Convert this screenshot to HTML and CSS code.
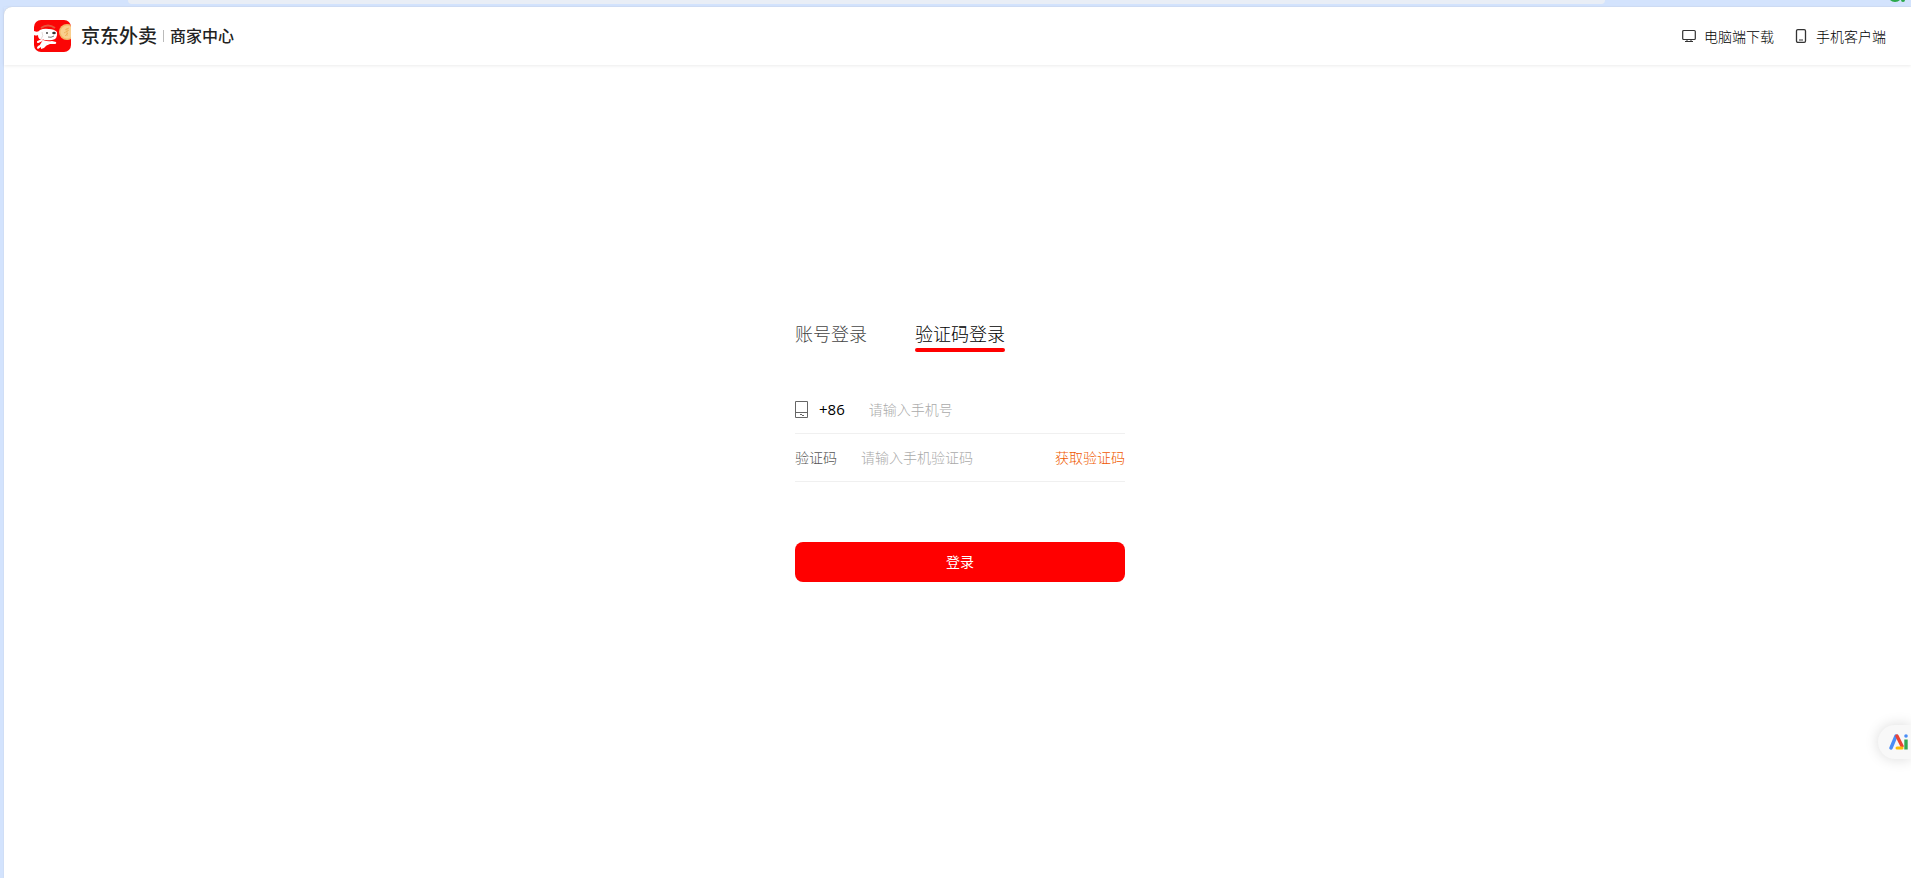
FILE: index.html
```html
<!DOCTYPE html>
<html lang="zh-CN">
<head>
    <meta charset="UTF-8">
    <meta name="viewport" content="width=device-width, initial-scale=1.0">
    <title>京东外卖商家中心</title>
    <link rel="stylesheet" href="styles.css">
</head>
<body>
    <div class="toolbar">
        <div class="address-bar"></div>
        <svg class="toolbar-icon" width="18" height="3" viewBox="0 0 18 3">
            <path d="M1 0h10q-2 2-5 2T1 0zM12 0h4q0 2-2 2t-2-2z" fill="#2ba84a"/>
        </svg>
    </div>
    <div class="page">
        <header class="header">
            <div class="brand">
                <svg class="logo" width="37" height="32" viewBox="0 0 37 32">
                    <defs>
                        <clipPath id="logo-clip"><rect width="37" height="32" rx="7"/></clipPath>
                    </defs>
                    <g clip-path="url(#logo-clip)">
                        <rect width="37" height="32" fill="#fb0505"/>
                        <path d="M7 8Q14 3 21 8" fill="none" stroke="#e8553c" stroke-width="2"/>
                        <!-- dog -->
                        <path d="M0 11Q4 13 6 10Q10 8 15 9Q20 9 23 12Q24 19 18 20Q11 21 8 19Q4 20 4 15Q2 16 0 15z" fill="#fff"/>
                        <path d="M9 20Q14 22 18 21L22 22Q23 24 20 24L16 24Q12 25 10 28L7 29L7 27L4 29Q2 28 4 26Q6 26 7 23z" fill="#fff"/>
                        <path d="M4 22l4-2" stroke="#fff" stroke-width="2" stroke-linecap="round"/>
                        <path d="M8 12Q10 16 7 19" fill="none" stroke="#e4dada" stroke-width="1"/>
                        <ellipse cx="20" cy="13" rx="1.800" ry="1.200" fill="#333"/>
                        <circle cx="13" cy="13" r=".9" fill="#333"/>
                        <path d="M14 17Q17 18 20 16" fill="none" stroke="#555" stroke-width=".8"/>
                        <!-- coin -->
                        <circle cx="33" cy="12" r="8" fill="#f3b769"/>
                        <circle cx="33" cy="12" r="6.500" fill="#f9cf8d"/>
                        <path d="M31 10l4-2M30 13l5-3M31 16l3-3M33 8v8" stroke="#eeac55" stroke-width=".8"/>
                    </g>
                </svg>
                <span class="brand-name">京东外卖</span>
                <span class="brand-line"></span>
                <span class="brand-sub">商家中心</span>
            </div>
            <nav class="downloads">
                <a href="#">
                    <svg width="14" height="14" viewBox="0 0 14 14" fill="none" stroke="#333">
                        <rect x=".7" y="1.500" width="12.600" height="9" rx="1" stroke-width="1.200"/>
                        <path d="M5 11v1.500M9 11v1.500M3 12.500h8"/>
                    </svg>
                    电脑端下载
                </a>
                <a href="#">
                    <svg width="14" height="14" viewBox="0 0 14 14" fill="none" stroke="#333">
                        <rect x="2.500" y=".7" width="9" height="12.600" rx="1.300" stroke-width="1.300"/>
                        <path d="M5 11h4"/>
                    </svg>
                    手机客户端
                </a>
            </nav>
        </header>
        <main class="content">
            <form class="login">
                <div class="tabs">
                    <button type="button" class="tab">账号登录</button>
                    <button type="button" class="tab active">验证码登录</button>
                </div>
                <div class="row">
                    <label class="area" for="phone">
                        <svg width="13" height="17" viewBox="0 0 13 17" fill="none" stroke="#666">
                            <path d="M.5.5h12v16H.5zM.5 11.500h12"/>
                            <path d="M5 13.500h2M7 14.500h2"/>
                        </svg>
                        <span>+86</span>
                    </label>
                    <input type="text" id="phone" placeholder="请输入手机号">
                </div>
                <div class="row">
                    <label class="code-label" for="code">验证码</label>
                    <input type="text" id="code" placeholder="请输入手机验证码">
                    <button type="button" class="get-code">获取验证码</button>
                </div>
                <button type="submit" class="submit">登录</button>
            </form>
        </main>
    </div>
    <button type="button" class="ai-button" aria-label="AI">
        <svg width="20" height="16" viewBox="0 0 20 16" fill="none" stroke-width="3.400" stroke-linecap="round">
            <path d="M2 14L7 2" stroke="#4a8df6"/>
            <path d="M8 2l5 10" stroke="#ea4335"/>
            <path d="M8 14h5" stroke="#fbbc05" stroke-width="3"/>
            <path d="M17 5.500v10" stroke="#34a853" stroke-linecap="butt"/>
            <circle cx="17" cy="2" r="1.800" fill="#4a8df6"/>
        </svg>
    </button>
</body>
</html>
```

FILE: styles.css
```css
* {
    box-sizing: border-box;
}
body {
    margin: 0;
    min-height: 100vh;
    display: flex;
    flex-direction: column;
    padding-left: 4px;
    background: #d3e3fd;
    font-family: "Noto Sans CJK SC", sans-serif;
    font-size: 14px;
    font-weight: 300;
    color: #222;
    overflow-x: hidden;
}
button, input {
    font: inherit;
    border: none;
    padding: 0;
    background: none;
}
button {
    cursor: pointer;
}
a {
    color: inherit;
    text-decoration: none;
}
.toolbar {
    display: flex;
    justify-content: space-between;
    align-items: flex-start;
    height: 7px;
    padding: 0 4px 0 124px;
}
.address-bar {
    flex: 1;
    height: 4px;
    margin-right: 284px;
    border-radius: 0 0 10px 10px;
    background: #e9eef6;
}
.page {
    flex: 1;
    display: flex;
    flex-direction: column;
    background: #fff;
    border-radius: 8px 0 0 0;
    box-shadow: 0 0 1px #b9b9b9;
}
.header {
    display: flex;
    justify-content: space-between;
    align-items: center;
    height: 58px;
    padding: 0 25px 0 30px;
    box-shadow: 0 1px 3px rgba(0, 0, 0, 0.08);
}
.brand {
    display: flex;
    align-items: center;
}
.brand-name, .brand-sub {
    line-height: 28px;
    padding-bottom: 3px;
}
.brand-name {
    margin-left: 10px;
    font-size: 19px;
    font-weight: 500;
}
.brand-line {
    width: 1px;
    height: 12px;
    margin: 0 6px;
    background: #bbb;
}
.brand-sub {
    font-size: 16px;
    font-weight: 500;
}
.downloads {
    display: flex;
    gap: 20px;
}
.downloads a {
    display: flex;
    align-items: center;
    gap: 8px;
    color: #000;
}
.content {
    flex: 1;
    display: flex;
    justify-content: center;
    align-items: center;
    padding: 0 0 44px 5px;
}
.login {
    width: 330px;
}
.tabs {
    display: flex;
    gap: 48px;
    margin-bottom: 34px;
}
.tab {
    height: 34px;
    line-height: 28px;
    padding-bottom: 4px;
    font-size: 18px;
    color: #444;
    position: relative;
}
.tab.active {
    color: #000;
}
.tab.active::after {
    content: '';
    position: absolute;
    left: 0;
    bottom: 0;
    width: 100%;
    height: 4px;
    border-radius: 2px;
    background: #f00;
}
.row {
    display: flex;
    align-items: center;
    height: 48px;
    border-bottom: 1px solid #f0f0f0;
}
.row input {
    flex: 1;
    min-width: 0;
    outline: none;
}
.row input::placeholder {
    color: #aaa;
}
.area {
    display: flex;
    align-items: center;
    gap: 11px;
    margin-right: 24px;
    font-family: "Open Sans", sans-serif;
    font-size: 15px;
    font-weight: 400;
    color: #000;
}
.code-label {
    margin-right: 24px;
    color: #555;
}
.get-code {
    color: #f05a00;
}
.submit {
    width: 100%;
    height: 40px;
    margin-top: 60px;
    padding-bottom: 2px;
    border-radius: 8px;
    background: #f00;
    color: #fff;
    font-weight: 400;
}
.ai-button {
    position: fixed;
    right: 0;
    bottom: 119px;
    display: flex;
    align-items: center;
    width: 33px;
    height: 34px;
    padding-left: 11px;
    border-radius: 17px 0 0 17px;
    background: #f8f8f8;
    box-shadow: 0 0 14px rgba(0, 0, 0, 0.15);
}
```
